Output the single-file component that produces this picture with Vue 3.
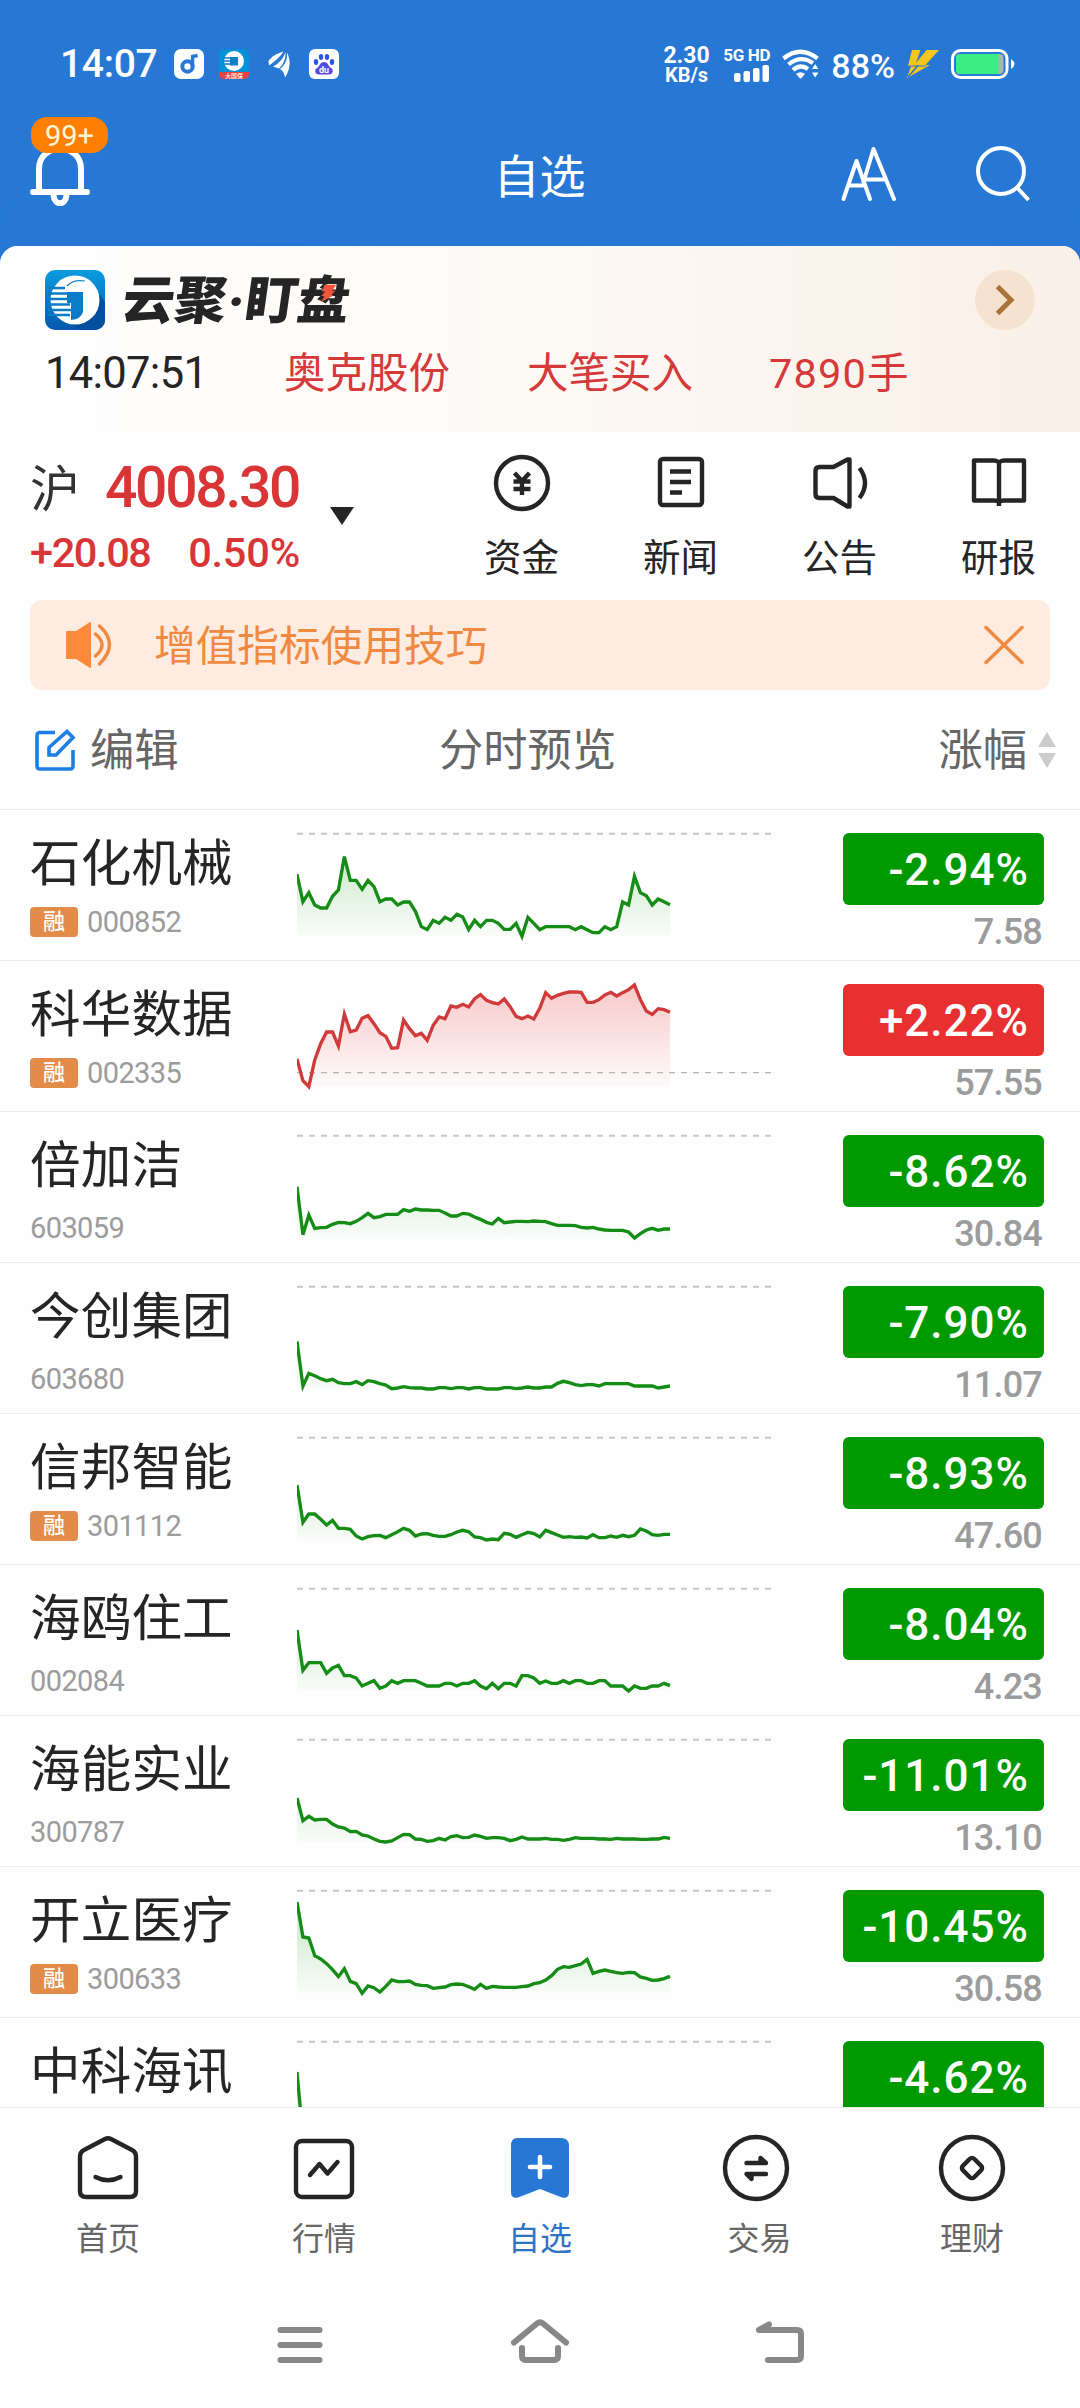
<template>
  <div class="page">
    <div class="status">
      <span class="clock">14:07</span>
      <svg class="app" width="30" height="30" viewBox="0 0 30 30">
        <rect width="30" height="30" rx="7" fill="#fff" />
        <circle cx="13.5" cy="17.5" r="5.2" fill="none" stroke="#2678d4" stroke-width="4" />
        <path d="M18.600 17.500V7.500l5-1" fill="none" stroke="#2678d4" stroke-width="3.400" />
      </svg>
      <svg class="app" width="30" height="30" viewBox="0 0 60 60">
        <rect width="60" height="60" rx="11" fill="#0591d6" />
        <circle cx="30" cy="24" r="20" fill="#fff" />
        <path d="M22 16h16v17H22z" fill="#0b7fca" />
        <path d="M8 18h18M8 24h16M8 30h18" stroke="#0b7fca" stroke-width="3" />
        <path d="M0 46h60v4a10 10 0 0 1-10 10H10A10 10 0 0 1 0 50z" fill="#ee3f3f" />
        <text x="30" y="58" font-size="12" text-anchor="middle" fill="#fff">大国保</text>
      </svg>
      <svg class="app" width="30" height="30" viewBox="0 0 30 30" fill="#fff">
        <path d="M4.500 12C8 7 13 4.500 19.500 2.500 16 8 11 12 5 16.500z" />
        <path d="M9 17.500c6-3 10.500-8 12.500-14.500.5 7-2.500 13-6.500 16.500z" />
        <path d="M16 20c5-4 7.500-9 7-16.500 4 8 3.500 17-2 25-.5-4-2-6.500-5-8.500z" />
      </svg>
      <svg class="app" width="30" height="30" viewBox="0 0 30 30">
        <rect width="30" height="30" rx="6" fill="#fff" />
        <g fill="#2a55e0">
          <ellipse cx="7" cy="13" rx="2.200" ry="2.900" />
          <ellipse cx="12" cy="8" rx="2.200" ry="3" />
          <ellipse cx="18" cy="8" rx="2.200" ry="3" />
          <ellipse cx="23" cy="13" rx="2.200" ry="2.900" />
        </g>
        <path d="M15 13c4 0 4 4 7 6s2 6.500-2 6.500H10c-4 0-5-4.500-2-6.500s3-6 7-6z" fill="#5a45e0" />
        <text x="15" y="23.500" font-size="9" font-weight="700" text-anchor="middle" fill="#fff">du</text>
      </svg>

      <div class="speed"><span>2.30</span><span>KB/s</span></div>
      <div class="signal">
        <span>5G HD</span>
        <svg width="36" height="17" viewBox="0 0 36 17" fill="#fff">
          <rect x="0" y="8" width="6.500" height="9" rx="2" />
          <rect x="9.500" y="6" width="6.500" height="11" rx="2" />
          <rect x="19" y="3" width="6.500" height="14" rx="2" />
          <rect x="28.500" y="0" width="6.500" height="17" rx="2" />
        </svg>
      </div>
      <svg class="wifi" width="38" height="30" viewBox="0 0 38 30">
        <g fill="none" stroke="#fff" stroke-width="4.200">
          <path d="M1.500 9.500Q18 -4 35.500 9.500" />
          <path d="M6.500 15.500Q18.500 5.500 31 14" />
          <path d="M11 21Q18.500 14.500 26 20" />
        </g>
        <path d="M14 25q4.500-3.500 9 0l-4 4.500h-1z" fill="#fff" />
        <path d="M30 20l3.200-5 3.200 5zM30 23.500l3.200 5 3.200-5z" fill="#fff" />
      </svg>
      <span class="percent">88%</span>
      <svg class="bolt" width="33" height="28" viewBox="0 0 33 28" fill="#f7c61b">
        <path d="M5 0h8.500L9 13l10.500-13H32L18.500 15H23L0 28 4 16H1z" />
        <path d="M1 27L11 15.500" stroke="#2678d4" stroke-width="1.500" />
        <path d="M2 16h17" stroke="#2678d4" stroke-width="1" />
      </svg>
      <svg class="battery" width="65" height="30" viewBox="0 0 65 30">
        <rect x="1.500" y="1.500" width="54.500" height="27" rx="8" fill="none" stroke="#fff" stroke-width="3" />
        <rect x="5" y="5" width="47.500" height="20" rx="4" fill="#a9b7b4" />
        <path d="M9 5h38.500v20H9a4 4 0 0 1-4-4V9a4 4 0 0 1 4-4z" fill="#3ced85" />
        <path d="M60 10q7 5 0 10z" fill="#fff" />
      </svg>
    </div>

    <header class="top">
      <div class="bell">
        <svg width="60" height="92" viewBox="0 0 60 92" fill="none" stroke="#fff" stroke-width="6" stroke-linecap="round">
          <path d="M9 77V55C9 28 51 28 51 55v22" />
          <path d="M3 78h54" />
          <path d="M23.500 81c1 11 12 11 13 0" />
        </svg>
        <span class="count">99+</span>
      </div>
      <h1>自选</h1>
      <div class="tools">
        <svg width="56" height="56" viewBox="0 0 56 56" fill="none" stroke="#fff" stroke-width="4" stroke-linecap="round" stroke-linejoin="round">
          <path d="M3.500 53L16.500 15 30 53M10 39.500h14" />
          <path d="M23.500 36L33.500 3 54 53M25 33.500h21" />
        </svg>
        <svg width="56" height="56" viewBox="0 0 56 56" fill="none" stroke="#fff" stroke-width="4">
          <circle cx="25" cy="25" r="23" />
          <path d="M41 41.500L52.500 54" />
        </svg>
      </div>
    </header>

    <section class="banner">
      <div class="brand">
        <svg width="60" height="60" viewBox="0 0 60 60">
          <defs>
            <linearGradient id="logoBg" x1="0" y1="0" x2="0" y2="1">
              <stop offset="0" stop-color="#0a9ce0" />
              <stop offset="1" stop-color="#0458ad" />
            </linearGradient>
          </defs>
          <rect width="60" height="60" rx="10" fill="url(#logoBg)" />
          <path d="M54 24l6 8v18a10 10 0 0 1-10 10H36L24 53z" fill="#034f9f" />
          <circle cx="30" cy="30" r="24.500" fill="#fff" />
          <path d="M22 16Q28 9 40 11" fill="none" stroke="#1384cd" stroke-width="1.200" />
          <path d="M22 22h16v20q-2 7-12 8V33h-4z" fill="#0a7bc7" />
          <path d="M3 18h17M3 23.500h19M3 29h19M3 34.500h22M3 40h23M3 45h22" stroke="#0a7bc7" stroke-width="2.600" />
        </svg>
        <div class="wordmark">
          云聚<i>·</i>盯盘
          <svg class="flash" width="15" height="20" viewBox="0 0 18 22">
            <path d="M3 0h14l-4 7h4l-4 5 2 1L1 21l4-7-4-1 4-5H1z" fill="#f0563c" />
          </svg>
        </div>
        <span class="more">
          <svg width="20" height="32" viewBox="0 0 20 32" fill="none" stroke="#a8743a" stroke-width="5">
            <path d="M2.500 2.500L16 16 2.500 29.500" />
          </svg>
        </span>
      </div>
      <div class="ticker">
        <span class="time">14:07:51</span>
        <span class="stock">奥克股份</span>
        <span class="deal">大笔买入</span>
        <span class="lots">7890手</span>
      </div>
    </section>

    <section class="market">
      <div class="index">
        <p class="main"><span class="city">沪</span><b>4008.30</b></p>
        <p class="diff"><span>+20.08</span><span class="rate">0.50%</span></p>
      </div>
      <span class="caret"></span>
      <ul class="links">
        <li>
          <svg width="60" height="60" viewBox="0 0 60 60" class="line">
            <circle cx="30" cy="30" r="26" />
            <path d="M22.500 20l7.500 8 7.500-8M21.500 28.500h17M21.500 36h17M30 28v14" />
          </svg>
          资金
        </li>
        <li>
          <svg width="60" height="60" viewBox="0 0 60 60" class="line">
            <rect x="9" y="6" width="42" height="46" rx="3" />
            <path d="M19 18.500h21M19 29h21M19 39.500h12" />
          </svg>
          新闻
        </li>
        <li>
          <svg width="60" height="60" viewBox="0 0 60 60" class="line">
            <path d="M5.500 18q0-4 4-4h14L37.500 6.500h2v47h-2L23.500 45h-14q-4 0-4-4z" />
            <path d="M49.500 15q11 15 0 30" />
          </svg>
          公告
        </li>
        <li>
          <svg width="60" height="60" viewBox="0 0 60 60" class="line">
            <path d="M30 53V9.500Q28 7.500 25 7.500H5v40h20q4 0 5 2 1-2 5-2h20v-40H35q-3 0-5 2" />
          </svg>
          研报
        </li>
      </ul>
    </section>

    <section class="notice">
      <svg width="46" height="46" viewBox="0 0 46 46" fill="none" stroke="#f08a42" stroke-width="3.500">
        <path d="M0 10q0-1 1-1h9L24 0h1v46h-1L10 37H1q-1 0-1-1z" fill="#ff8a3c" stroke="none" />
        <path d="M29.500 12q13 11 0 22" stroke-linecap="round" />
        <path d="M33.500 4q20 18 0 38" stroke-linecap="round" />
      </svg>
      <span>增值指标使用技巧</span>
      <svg class="close" width="42" height="40" viewBox="0 0 42 40" stroke="#f08a42" stroke-width="3.500" stroke-linecap="round">
        <path d="M3 2.500L39 37.500M39 2.500L3 37.500" />
      </svg>
    </section>

    <section class="titles">
      <div class="edit">
        <svg width="42" height="42" viewBox="0 0 42 42" fill="none" stroke="#1b7fe3" stroke-width="3.600">
          <path d="M21 3.500H6q-3 0-3 3V37q0 3 3 3h30q3 0 3-3V21" />
          <path d="M33 2.500l6 6L22 26h-7v-7.500z" />
        </svg>
        <span>编辑</span>
      </div>
      <div class="preview"><span>分时预览</span></div>
      <div class="sort">
        <span>涨幅</span>
        <svg width="18" height="36" viewBox="0 0 18 36" fill="#ccc">
          <path d="M0 15L9 0l9 15zM0 21h18L9 36z" />
        </svg>
      </div>
    </section>

    <section class="list">
      <svg width="0" height="0" class="defs">
        <defs>
          <linearGradient id="fillDown" gradientUnits="userSpaceOnUse" x1="0" y1="74" x2="0" y2="380">
            <stop offset="0" stop-color="#0a9a0a" stop-opacity="0.26" />
            <stop offset="1" stop-color="#0a9a0a" stop-opacity="0.02" />
          </linearGradient>
          <linearGradient id="fillUp" gradientUnits="userSpaceOnUse" x1="0" y1="74" x2="0" y2="380">
            <stop offset="0" stop-color="#e83030" stop-opacity="0.26" />
            <stop offset="1" stop-color="#e83030" stop-opacity="0.02" />
          </linearGradient>
        </defs>
      </svg>
      <div v-for="s in stocks" :key="s.name" class="row" :class="{ up: s.up }">
        <div class="who">
          <p class="name">{{ s.name }}</p>
          <p v-if="s.code" class="code" :class="{ plain: !s.margin }"><em v-if="s.margin">融</em>{{ s.code }}</p>
        </div>
        <svg class="chart" width="474" height="150" viewBox="0 3 1422 450">
          <path class="area" :d="area(s)" />
          <path class="base" :d="s.up ? 'M0 338H1422' : 'M0 74.500H1422'" />
          <polyline class="trend" :points="line(s)" />
        </svg>
        <div class="quote">
          <span class="pct">{{ s.pct }}</span>
          <span v-if="s.price" class="price">{{ s.price }}</span>
        </div>
      </div>
    </section>

    <nav class="tabs">
      <div class="tab">
        <svg width="68" height="68" viewBox="0 0 68 68" class="line">
          <path d="M6 23q0-5 4-7L31 5q3-1.500 6 0l21 11q4 2 4 7v34q0 6-6 6H12q-6 0-6-6z" />
          <path d="M21.500 43q12.500 6.500 25 0" stroke-linecap="round" />
        </svg>
        首页
      </div>
      <div class="tab">
        <svg width="68" height="68" viewBox="0 0 68 68" class="line">
          <rect x="6" y="7" width="56" height="56" rx="6" />
          <path d="M20 41l9.500-11 8 9.500L47.500 28" stroke-linecap="round" />
        </svg>
        行情
      </div>
      <div class="tab on">
        <svg width="68" height="68" viewBox="0 0 68 68">
          <path d="M11 4h44q8 0 8 8v46q0 7-7 5.500L34 55 12 63.500Q5 65 5 58V12q0-8 6-8z" fill="#2678d4" />
          <path d="M34 23v20M24 33h20" stroke="#fff" stroke-width="4.600" stroke-linecap="round" />
        </svg>
        自选
      </div>
      <div class="tab trade">
        <svg width="68" height="68" viewBox="0 0 68 68" class="line">
          <circle cx="34" cy="34" r="31" />
          <path d="M24.500 29H44l-5.500-5V28" stroke-linecap="round" />
          <path d="M44 40H24.500l5 5V41" stroke-linecap="round" />
        </svg>
        <span>交易</span>
      </div>
      <div class="tab">
        <svg width="68" height="68" viewBox="0 0 68 68" class="line">
          <circle cx="34" cy="34" r="31" />
          <rect x="26" y="26" width="16" height="16" rx="3" transform="rotate(45 34 34)" />
        </svg>
        理财
      </div>
    </nav>

    <div class="sysnav">
      <svg width="60" height="60" viewBox="0 0 60 60">
        <path d="M10.500 15h39M10.500 30h39M10.500 45h39" />
      </svg>
      <svg width="60" height="60" viewBox="0 0 60 60">
        <path d="M4 27.500L27 8.500q3-2.500 6 0l23 19" />
        <path d="M12 33v8q0 4 4 4h28q4 0 4-4v-8" />
      </svg>
      <svg width="60" height="60" viewBox="0 0 60 60">
        <path d="M19 9.500L9 15h38q4 0 4 4v22q0 4-4 4H18" />
      </svg>
    </div>
  </div>
</template>

<script setup>
import { ref } from 'vue'

// ancho entre dos puntos de la línea de minutos
const STEP = 1119 / 63
const BOTTOM = 380

// offset: valor que corresponde al borde superior de la fila
const stocks = ref([
  {
    name: '石化机械', code: '000852', margin: true, pct: '-2.94%', price: '7.58', offset: 27,
    points: [223, 305, 278, 315, 324, 324, 289, 270, 170, 241, 241, 268, 241, 260, 305, 297, 297, 315, 306, 306, 334, 380, 389, 361, 370, 352, 361, 343, 351, 389, 361, 380, 361, 361, 370, 388, 388, 370, 409, 352, 370, 389, 380, 380, 380, 380, 380, 389, 380, 389, 398, 398, 380, 389, 380, 306, 315, 229, 278, 287, 315, 297, 305, 314]
  },
  {
    name: '科华数据', code: '002335', margin: true, up: true, pct: '+2.22%', price: '57.55', offset: 480,
    points: [777, 842, 860, 780, 731, 696, 696, 738, 642, 695, 690, 655, 647, 671, 698, 709, 745, 743, 660, 686, 707, 700, 721, 676, 651, 656, 618, 622, 613, 621, 596, 584, 601, 608, 612, 597, 620, 649, 656, 648, 657, 625, 578, 595, 586, 580, 576, 576, 577, 607, 607, 599, 585, 577, 588, 578, 569, 555, 599, 633, 643, 626, 629, 637]
  },
  {
    name: '倍加洁', code: '603059', pct: '-8.62%', price: '30.84', offset: 3,
    points: [230, 374, 315, 355, 353, 352, 343, 337, 338, 341, 334, 323, 310, 323, 320, 313, 313, 313, 299, 304, 297, 300, 300, 301, 301, 309, 318, 318, 310, 312, 321, 328, 337, 342, 325, 338, 336, 334, 334, 335, 333, 334, 335, 341, 346, 346, 346, 347, 352, 354, 352, 357, 360, 361, 361, 361, 366, 384, 371, 360, 355, 361, 357, 357]
  },
  {
    name: '今创集团', code: '603680', pct: '-7.90%', price: '11.07', offset: 456,
    points: [694, 828, 790, 797, 806, 812, 808, 818, 821, 821, 815, 824, 812, 815, 821, 825, 836, 834, 830, 833, 834, 834, 837, 837, 833, 833, 836, 833, 833, 837, 833, 833, 837, 837, 837, 833, 833, 836, 834, 831, 834, 834, 831, 831, 820, 814, 818, 824, 827, 824, 824, 828, 821, 821, 821, 821, 821, 828, 828, 828, 828, 834, 831, 828]
  },
  {
    name: '信邦智能', code: '301112', margin: true, pct: '-8.93%', price: '47.60', offset: 9,
    points: [225, 337, 312, 312, 328, 345, 331, 355, 355, 358, 378, 387, 380, 377, 376, 383, 374, 365, 355, 361, 378, 372, 371, 376, 379, 379, 374, 366, 361, 365, 381, 383, 390, 387, 389, 370, 373, 382, 374, 367, 371, 381, 361, 368, 375, 382, 380, 382, 381, 384, 374, 383, 383, 378, 382, 376, 380, 376, 357, 363, 374, 376, 373, 373]
  },
  {
    name: '海鸥住工', code: '002084', pct: '-8.04%', price: '4.23', offset: 462,
    points: [660, 781, 758, 758, 758, 790, 774, 766, 797, 797, 804, 828, 820, 812, 835, 828, 812, 820, 812, 812, 812, 820, 828, 828, 828, 820, 820, 828, 820, 820, 812, 828, 836, 820, 836, 820, 820, 828, 797, 797, 804, 820, 813, 820, 820, 812, 820, 812, 812, 820, 820, 812, 812, 828, 828, 828, 843, 828, 835, 835, 828, 828, 820, 827]
  },
  {
    name: '海能实业', code: '300787', pct: '-11.01%', price: '13.10', offset: 15,
    points: [264, 332, 319, 330, 328, 328, 342, 351, 354, 365, 364, 375, 378, 387, 394, 396, 393, 383, 373, 374, 387, 388, 394, 392, 385, 390, 380, 377, 383, 382, 375, 379, 385, 383, 383, 385, 392, 388, 381, 387, 387, 387, 385, 388, 388, 391, 388, 383, 385, 385, 385, 387, 387, 388, 385, 387, 387, 387, 388, 388, 387, 387, 382, 385]
  },
  {
    name: '开立医疗', code: '300633', margin: true, pct: '-10.45%', price: '30.58', offset: 468,
    points: [576, 681, 684, 737, 747, 761, 779, 800, 776, 814, 821, 850, 828, 833, 846, 829, 810, 815, 815, 813, 823, 826, 827, 835, 833, 831, 824, 822, 823, 830, 838, 823, 835, 829, 831, 832, 832, 832, 830, 828, 821, 818, 810, 797, 778, 770, 772, 767, 762, 748, 790, 784, 780, 784, 788, 790, 787, 788, 801, 805, 811, 810, 806, 799]
  },
  {
    name: '中科海讯', pct: '-4.62%', offset: 921,
    points: [1086, 1280]
  }
])

function line(s) {
  return s.points.map((y, i) => `${(i * STEP).toFixed(1)},${y - s.offset}`).join(' ')
}

function area(s) {
  const end = ((s.points.length - 1) * STEP).toFixed(1)
  return `M0,${BOTTOM} L${line(s)} L${end},${BOTTOM}Z`
}
</script>

<style>
body {
  background: #fff;
}
</style>

<style scoped>
.page {
  width: 1080px;
  height: 2408px;
  display: flex;
  flex-direction: column;
  overflow: hidden;
  background: #fefefe;
  font-family: Roboto, "Noto Sans CJK SC", sans-serif;
  color: #252525;
}
h1,
p,
ul {
  margin: 0;
  padding: 0;
  font-weight: 400;
}
svg {
  display: block;
  flex: none;
}
.line {
  fill: none;
  stroke: #252525;
  stroke-width: 4.4;
  stroke-linejoin: round;
}

/* barra de estado */
.status {
  height: 100px;
  padding: 28px 64px 0 60px;
  box-sizing: border-box;
  display: flex;
  align-items: center;
  background: #2678d4;
  color: #fff;
  font-weight: 500;
}
.clock {
  width: 114px;
  font-size: 39px;
  line-height: 72px;
  letter-spacing: -0.3px;
}
.app {
  margin-right: 15px;
}
.speed {
  width: 46px;
  margin-left: 310px;
  padding-top: 2px;
  display: flex;
  flex-direction: column;
  align-items: center;
  font-size: 23px;
  line-height: 20px;
  font-weight: 700;
}
.speed span:last-child {
  font-size: 20px;
  line-height: 18px;
}
.signal {
  width: 48px;
  margin-left: 13px;
  display: flex;
  flex-direction: column;
  align-items: flex-end;
  font-size: 17px;
  line-height: 16px;
  font-weight: 700;
  letter-spacing: -0.3px;
  white-space: nowrap;
}
.signal svg {
  margin-top: 2px;
}
.wifi {
  margin-left: 12px;
}
.percent {
  width: 76px;
  margin-left: 11px;
  font-size: 34px;
  line-height: 40px;
  padding-top: 4px;
}
.battery {
  margin-left: 11px;
}

/* cabecera */
.top {
  height: 146px;
  padding: 0 48px 0 30px;
  display: grid;
  grid-template-columns: 1fr auto 1fr;
  background: #2678d4;
  color: #fff;
}
.bell {
  position: relative;
  padding-top: 14px;
}
.count {
  position: absolute;
  left: 1px;
  top: 17px;
  width: 77px;
  height: 36px;
  border-radius: 16px;
  background: #ff8000;
  color: #fff6dc;
  font-size: 29px;
  line-height: 39px;
  text-align: center;
}
h1 {
  padding-left: 17px;
  font-size: 46px;
  line-height: 154px;
}
.tools {
  display: flex;
  justify-content: flex-end;
  gap: 80px;
  padding-top: 46px;
}

/* banner */
.banner {
  height: 186px;
  box-sizing: border-box;
  padding: 24px 45px 0;
  border-radius: 18px 18px 0 0;
  background: linear-gradient(90deg, #fff, #fdf9f5 50%, #f9f0e7);
  box-shadow: 0 -40px 0 #2678d4;
  position: relative;
}
.banner::before {
  content: "";
  position: absolute;
  inset: 0 0 auto;
  height: 40px;
  z-index: -1;
  background: #2678d4;
}
.brand {
  display: flex;
  align-items: center;
}
.wordmark {
  position: relative;
  margin-left: 18px;
  padding-top: 3px;
  font-size: 52px;
  line-height: 57px;
  font-weight: 900;
  transform: skewX(-8deg);
  white-space: nowrap;
}
.wordmark i {
  display: inline-block;
  width: 19px;
  text-align: center;
  font-style: normal;
}
.flash {
  position: absolute;
  right: 15px;
  top: 14px;
}
.more {
  width: 60px;
  height: 60px;
  margin-left: auto;
  border-radius: 50%;
  background: #f5e3cf;
  display: flex;
  align-items: center;
  justify-content: center;
}
.ticker {
  display: flex;
  font-size: 41.5px;
  line-height: 87px;
  color: #d5393a;
}
.time {
  width: 239px;
  font-size: 43.5px;
  letter-spacing: -0.7px;
  color: #252525;
}
.stock {
  width: 243px;
}
.deal {
  width: 242px;
}
.lots {
  letter-spacing: 1.2px;
}

/* índice */
.market {
  height: 168px;
  display: flex;
}
.index {
  width: 300px;
  padding-left: 30px;
  box-sizing: border-box;
  color: #d93536;
}
.main {
  display: flex;
  height: 88px;
  padding-top: 12px;
  line-height: 88px;
  box-sizing: border-box;
}
.city {
  width: 75px;
  padding-top: 2px;
  font-size: 50px;
  color: #333;
}
.main b {
  font-size: 57px;
  font-weight: 500;
  letter-spacing: -2.3px;
}
.diff {
  display: flex;
  justify-content: space-between;
  padding-top: 3px;
  font-size: 41.5px;
  line-height: 60px;
  font-weight: 500;
  letter-spacing: -1.4px;
}
.rate {
  letter-spacing: -0.2px;
}
.caret {
  margin: 75px 0 0 30px;
  width: 0;
  height: 0;
  border: 12px solid transparent;
  border-top: 18px solid #252525;
  border-bottom: 0;
}
.links {
  display: grid;
  grid-template-columns: repeat(4, 159px);
  margin-left: 88px;
  list-style: none;
}
.links li {
  display: flex;
  flex-direction: column;
  align-items: center;
  padding-top: 21px;
  font-size: 37.5px;
  line-height: 90px;
}

/* aviso */
.notice {
  height: 90px;
  margin: 0 30px;
  padding: 0 25px 0 36px;
  display: flex;
  align-items: center;
  border-radius: 12px;
  background: #feece0;
  color: #f08a42;
  font-size: 41.7px;
}
.notice span {
  margin-left: 42px;
  padding-top: 4px;
  line-height: 86px;
}
.close {
  margin-left: auto;
}

.titles {
  height: 119px;
  display: flex;
  align-items: center;
  padding: 0 24px 0 34px;
  color: #666;
  font-size: 44.3px;
  line-height: 116px;
}
.titles span {
  padding-top: 3px;
}
.edit {
  width: 405px;
  display: flex;
  align-items: center;
  gap: 14px;
}
.preview {
  display: flex;
}
.sort {
  margin-left: auto;
  display: flex;
  align-items: center;
  gap: 11px;
}

/* lista */
.list {
  height: 1298px;
  overflow: hidden;
  position: relative;
}
.defs {
  position: absolute;
}
.row {
  height: 151px;
  box-sizing: border-box;
  border-top: 1px solid #ebebeb;
  padding: 0 36px 0 30px;
  display: flex;
}
.who {
  width: 267px;
}
.name {
  padding-top: 14px;
  font-size: 50.5px;
  line-height: 80px;
  letter-spacing: 0.2px;
}
.code {
  display: flex;
  align-items: center;
  height: 36px;
  font-size: 29px;
  letter-spacing: -0.6px;
  color: #9c9c9c;
}
.plain {
  padding-top: 4px;
}
.code em {
  width: 48px;
  height: 30px;
  margin-right: 9px;
  border-radius: 4px;
  background: #e38c4a;
  color: #fff;
  font-size: 22px;
  line-height: 30px;
  font-style: normal;
  font-weight: 500;
  letter-spacing: 0;
  text-align: center;
}
.area {
  fill: url(#fillDown);
}
.up .area {
  fill: url(#fillUp);
}
.base {
  stroke: #c8c8c8;
  stroke-width: 6;
  stroke-dasharray: 18 18;
}
.up .base {
  stroke: #b9b3b3;
  stroke-width: 4;
}
.trend {
  fill: none;
  stroke: #158c15;
  stroke-width: 10;
}
.up .trend {
  stroke: #d13a3a;
}
.quote {
  width: 201px;
  margin-left: auto;
  padding-top: 23px;
  display: flex;
  flex-direction: column;
  align-items: flex-end;
}
.pct {
  width: 201px;
  height: 72px;
  box-sizing: border-box;
  padding-right: 15px;
  border-radius: 6px;
  background: #009900;
  color: #fff;
  font-size: 44px;
  line-height: 75px;
  font-weight: 500;
  letter-spacing: 1px;
  text-align: right;
}
.up .pct {
  background: #e83030;
}
.price {
  padding-right: 2px;
  font-size: 36px;
  line-height: 54px;
  letter-spacing: -0.8px;
  font-weight: 500;
  color: #9c9c9c;
}

/* pestañas */
.tabs {
  height: 166px;
  border-top: 1px solid #ebebeb;
  box-sizing: border-box;
  display: grid;
  grid-template-columns: repeat(5, 1fr);
}
.tab {
  display: flex;
  flex-direction: column;
  align-items: center;
  padding-top: 26px;
  font-size: 32px;
  line-height: 75px;
  color: #666;
}
.trade span {
  padding-left: 7px;
}
.on {
  color: #2f74c2;
}
.sysnav {
  flex: 1;
  display: flex;
  justify-content: center;
  gap: 180px;
  padding-top: 42px;
}
.sysnav svg {
  fill: none;
  stroke: #888;
  stroke-width: 6;
  stroke-linecap: round;
  stroke-linejoin: round;
}
</style>
